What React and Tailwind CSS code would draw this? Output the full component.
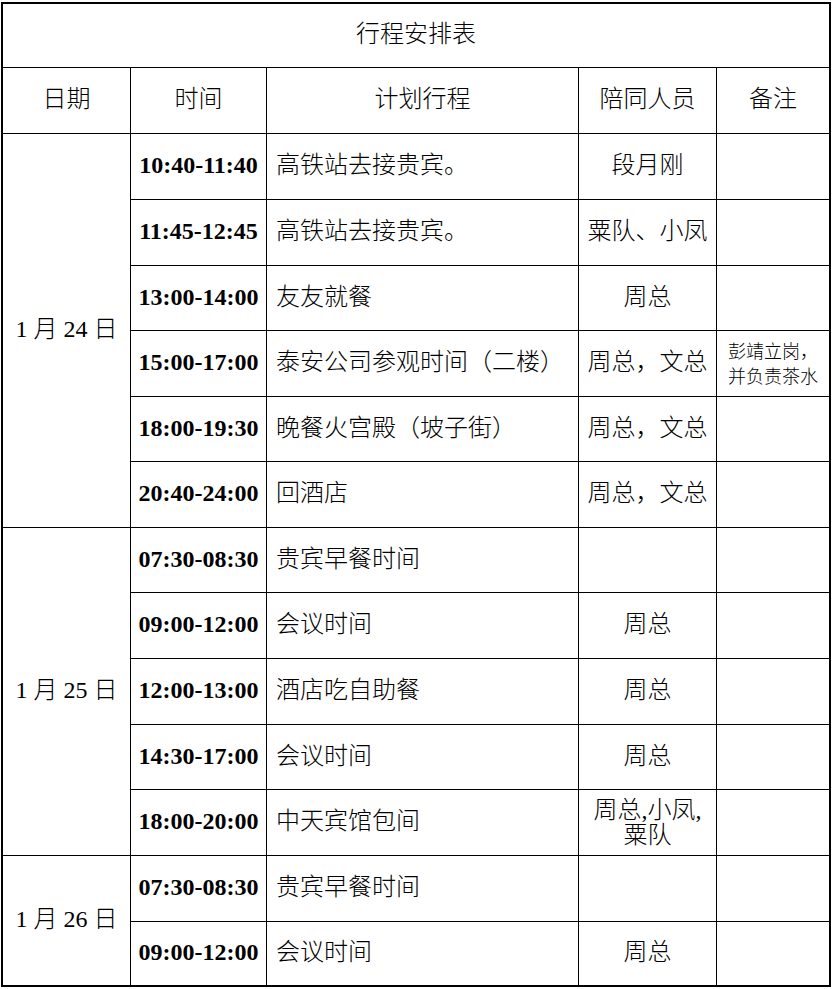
import { Fragment } from 'react';

const SCHEDULE = [
  {
    date: '1 月 24 日',
    rows: [
      { time: '10:40-11:40', plan: '高铁站去接贵宾。', people: '段月刚' },
      { time: '11:45-12:45', plan: '高铁站去接贵宾。', people: '粟队、小凤' },
      { time: '13:00-14:00', plan: '友友就餐', people: '周总' },
      { time: '15:00-17:00', plan: '泰安公司参观时间（二楼）', people: '周总，文总', note: ['彭靖立岗，', '并负责茶水'] },
      { time: '18:00-19:30', plan: '晚餐火宫殿（坡子街）', people: '周总，文总' },
      { time: '20:40-24:00', plan: '回酒店', people: '周总，文总' },
    ],
  },
  {
    date: '1 月 25 日',
    rows: [
      { time: '07:30-08:30', plan: '贵宾早餐时间', people: '' },
      { time: '09:00-12:00', plan: '会议时间', people: '周总' },
      { time: '12:00-13:00', plan: '酒店吃自助餐', people: '周总' },
      { time: '14:30-17:00', plan: '会议时间', people: '周总' },
      { time: '18:00-20:00', plan: '中天宾馆包间', people: ['周总,小凤,', '粟队'] },
    ],
  },
  {
    date: '1 月 26 日',
    rows: [
      { time: '07:30-08:30', plan: '贵宾早餐时间', people: '' },
      { time: '09:00-12:00', plan: '会议时间', people: '周总' },
    ],
  },
];

const SPAN = { 6: 'row-span-6', 5: 'row-span-5', 2: 'row-span-2' };

const cell = 'bg-white flex items-center';

export default function App() {
  return (
    <div className="min-h-screen bg-white text-black font-['Liberation_Serif','Noto_Sans_CJK_SC',serif]">
      <div className="ml-[1px] mt-[2px] w-[830px] border-2 border-black bg-black">
        <div className="grid gap-px grid-cols-[127px_135px_311px_137px_112px] grid-rows-[63px_65px_65px_65px_64px_65px_64px_65px_64px_65px_65px_64px_65px_65px_63px]">
          <div className={`${cell} col-span-5 justify-center pb-[3px] text-[24px] font-light`}>行程安排表</div>

          {['日期', '时间', '计划行程', '陪同人员', '备注'].map((h) => (
            <div key={h} className={`${cell} justify-center pb-[3px] text-[24px] font-light`}>{h}</div>
          ))}

          {SCHEDULE.map((day) => (
            <Fragment key={day.date}>
              <div className={`${cell} ${SPAN[day.rows.length]} justify-center pb-[3px] text-[24px] font-light whitespace-pre`}>
                {day.date}
              </div>
              {day.rows.map((r, i) => (
                <Fragment key={i}>
                  <div className={`${cell} justify-center pb-[3px] text-[24px] font-bold`}>{r.time}</div>
                  <div className={`${cell} pl-[9px] pb-[3px] text-[24px] font-light whitespace-nowrap`}>{r.plan}</div>
                  <div className={`${cell} justify-center text-center text-[24px] font-light ${Array.isArray(r.people) ? '' : 'pb-[3px]'}`}>
                    {Array.isArray(r.people) ? (
                      <div className="leading-[25px]">
                        {r.people.map((l) => <div key={l}>{l}</div>)}
                      </div>
                    ) : r.people}
                  </div>
                  <div className={`${cell} pl-[11px] pt-[2px] text-[18px] font-light`}>
                    {r.note && (
                      <div className="leading-[25px]">
                        {r.note.map((l) => <div key={l}>{l}</div>)}
                      </div>
                    )}
                  </div>
                </Fragment>
              ))}
            </Fragment>
          ))}
        </div>
      </div>
    </div>
  );
}
